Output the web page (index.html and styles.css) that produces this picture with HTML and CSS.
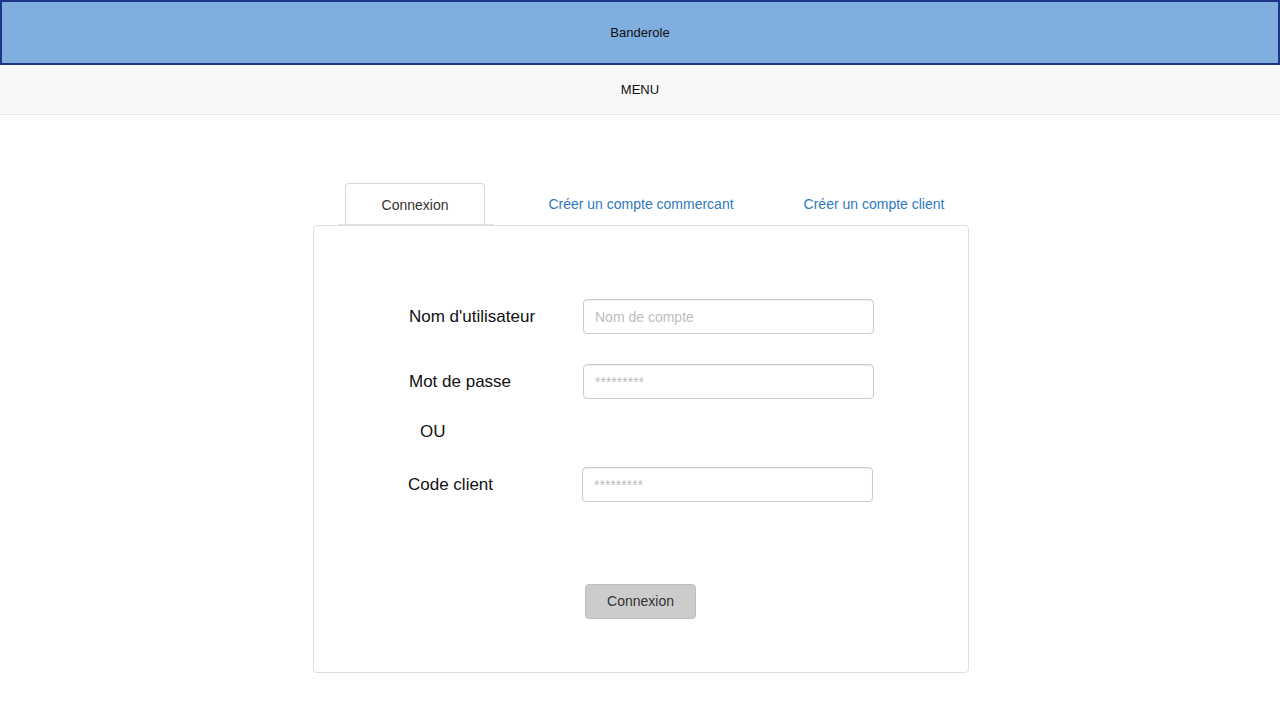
FILE: index.html
```html
<!DOCTYPE html>
<html lang="fr">
<head>
<meta charset="utf-8">
<title>Connexion</title>
<link rel="stylesheet" href="styles.css">
</head>
<body>
<header class="banner">Banderole</header>
<nav class="menu">MENU</nav>
<main class="login">
  <div class="tabs">
    <div class="tab-active-wrap">
      <div class="tab-active">Connexion</div>
    </div>
    <a class="tab-link tab-merchant" href="#">Créer un compte commercant</a>
    <a class="tab-link tab-client" href="#">Créer un compte client</a>
  </div>
  <section class="panel">
    <form class="form">
      <div class="row row-first">
        <label class="label">Nom d'utilisateur</label>
        <input class="field" type="text" placeholder="Nom de compte">
      </div>
      <div class="row row-second">
        <label class="label">Mot de passe</label>
        <input class="field" type="text" placeholder="*********">
      </div>
      <div class="or">OU</div>
      <div class="row row-code">
        <label class="label">Code client</label>
        <input class="field" type="text" placeholder="*********">
      </div>
      <div class="actions">
        <button class="btn" type="button">Connexion</button>
      </div>
    </form>
  </section>
</main>
</body>
</html>
```

FILE: styles.css
```css
* { box-sizing: border-box; }
html, body { margin: 0; padding: 0; background: #fff; }
body {
  font-family: "Liberation Sans", Arial, Helvetica, sans-serif;
  color: #111;
}

.banner {
  height: 65px;
  border: 2px solid #1d3687;
  background: #80aede;
  display: flex;
  align-items: center;
  justify-content: center;
  font-size: 13px;
  color: #111;
}

.menu {
  height: 50px;
  background: #f7f7f7;
  border-bottom: 1px solid #e7e7e7;
  display: flex;
  align-items: center;
  justify-content: center;
  font-size: 13px;
  color: #111;
}

.login {
  width: 656px;
  margin: 68px 0 0 calc(50% - 327px);
}

.tabs {
  display: flex;
  align-items: flex-end;
  height: 42px;
}

.tab-active-wrap {
  margin-left: 25px;
  width: 156px;
  height: 42px;
  padding-left: 7px;
  border-bottom: 1px solid #e2e2e2;
}

.tab-active {
  width: 140px;
  height: 41px;
  border: 1px solid #d6d6d6;
  border-bottom: none;
  border-radius: 4px 4px 0 0;
  background: #fff;
  display: flex;
  align-items: center;
  justify-content: center;
  font-size: 14px;
  color: #333;
  padding-top: 1px;
}

.tab-link {
  height: 42px;
  display: flex;
  align-items: center;
  justify-content: center;
  font-size: 14px;
  color: #2f79bd;
  text-decoration: none;
  padding-bottom: 1px;
}
.tab-merchant { width: 294px; }
.tab-client { width: 172px; }

.panel {
  height: 448px;
  border: 1px solid #dedede;
  border-radius: 4px;
  background: #fff;
}

.form {
  padding: 73px 0 0 95px;
}

.row {
  display: flex;
  align-items: center;
  height: 35px;
}
.row-second { margin-top: 30px; }
.row-code { margin-left: -1px; }

.label {
  width: 174px;
  font-size: 17px;
  color: #111;
}

.field {
  width: 291px;
  height: 35px;
  border: 1px solid #cccccc;
  border-radius: 4px;
  padding: 0 11px;
  font-family: "Liberation Sans", Arial, sans-serif;
  font-size: 14px;
  color: #333;
  box-shadow: inset 0 1px 1px rgba(0, 0, 0, 0.075);
  outline: none;
}
.field::placeholder { color: #bdbdbd; }

.or {
  margin: 23px 0 25px 11px;
  font-size: 17px;
  line-height: 20px;
  color: #111;
}

.actions {
  margin: 82px 1px 0 -95px;
  display: flex;
  justify-content: center;
}

.btn {
  width: 111px;
  height: 35px;
  background: #cccccc;
  border: 1px solid #bdbdbd;
  border-radius: 4px;
  font-family: "Liberation Sans", Arial, sans-serif;
  font-size: 14px;
  color: #333;
  padding: 0 0 1px;
}
```
